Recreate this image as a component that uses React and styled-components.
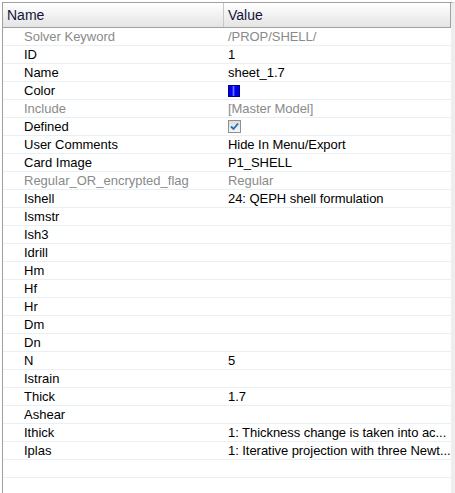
import React from 'react'
import styled, { createGlobalStyle } from 'styled-components'

const Global = createGlobalStyle`
  html, body { margin: 0; padding: 0; background: #fff; }
  body { font-family: "Liberation Sans", Arial, sans-serif; }
`

const Page = styled.div`
  width: 455px;
  height: 493px;
  padding: 2px 0 0 2px;
  box-sizing: border-box;
  overflow: hidden;
  background: #fff;
`

const Grid = styled.div`
  width: 453px;
  height: 491px;
  border-left: 1px solid #a0a0a0;
  border-top: 1px solid #a0a0a0;
  border-right: 4px solid #eeeeee;
  box-sizing: border-box;
  display: flex;
  flex-direction: column;
  overflow: hidden;
`

const Header = styled.div`
  display: grid;
  grid-template-columns: 221px 1fr;
  height: 24px;
  border-bottom: 1px solid #a0a0a0;
  border-right: 1px solid #a0a0a0;
  background: linear-gradient(#ffffff, #e4e4e4);
  flex-shrink: 0;
`

const HeadCell = styled.div`
  display: flex;
  align-items: center;
  padding-left: ${p => p.$pad}px;
  font-size: 14px;
  color: #14143a;
  border-right: ${p => (p.$sep ? '1px solid #c8c8c8' : 'none')};
`

const Row = styled.div`
  display: grid;
  grid-template-columns: 221px 1fr;
  height: 17px;
  border-bottom: 1px solid #e7f0f4;
  flex-shrink: 0;
  font-size: 13px;
  line-height: 17px;
  color: ${p => (p.$dim ? '#8a8a8a' : '#000')};
`

const NameCell = styled.div`
  padding-left: 21px;
  white-space: nowrap;
  overflow: hidden;
`

const ValueCell = styled.div`
  padding-left: 4px;
  white-space: nowrap;
  display: flex;
  align-items: center;
  letter-spacing: -0.05px;
`

const Swatch = styled.span`
  width: 10px;
  height: 10px;
  border: 1px solid #000080;
  background: linear-gradient(90deg, #0000e0 0%, #0000ff 30%, #7070ff 45%, #0000ff 60%, #0000d8 100%);
`

const Check = styled.span`
  width: 11px;
  height: 11px;
  border: 1px solid #8e8f8f;
  background: linear-gradient(#dcdcdc, #f6f6f6);
  display: flex;
  align-items: center;
  justify-content: center;
`

const rows = [
  ['Solver Keyword', '/PROP/SHELL/', true],
  ['ID', '1'],
  ['Name', 'sheet_1.7'],
  ['Color', 'swatch'],
  ['Include', '[Master Model]', true],
  ['Defined', 'check'],
  ['User Comments', 'Hide In Menu/Export'],
  ['Card Image', 'P1_SHELL'],
  ['Regular_OR_encrypted_flag', 'Regular', true],
  ['Ishell', '24: QEPH shell formulation'],
  ['Ismstr', ''],
  ['Ish3', ''],
  ['Idrill', ''],
  ['Hm', ''],
  ['Hf', ''],
  ['Hr', ''],
  ['Dm', ''],
  ['Dn', ''],
  ['N', '5'],
  ['Istrain', ''],
  ['Thick', '1.7'],
  ['Ashear', ''],
  ['Ithick', '1: Thickness change is taken into ac...'],
  ['Iplas', '1: Iterative projection with three Newt...'],
  ['', ''],
  ['', ''],
]

const renderValue = v => {
  if (v === 'swatch') return <Swatch />
  if (v === 'check')
    return (
      <Check>
        <svg width="9" height="9" viewBox="0 0 9 9">
          <path d="M1 4.5 L3.5 7 L8 1.5" fill="none" stroke="#1f6fb8" strokeWidth="1.8" />
        </svg>
      </Check>
    )
  return v
}

export default function App() {
  return (
    <Page>
      <Global />
      <Grid>
        <Header>
          <HeadCell $pad={4} $sep>Name</HeadCell>
          <HeadCell $pad={4}>Value</HeadCell>
        </Header>
        {rows.map(([n, v, dim], i) => (
          <Row key={i} $dim={dim}>
            <NameCell>{n}</NameCell>
            <ValueCell>{renderValue(v)}</ValueCell>
          </Row>
        ))}
      </Grid>
    </Page>
  )
}
